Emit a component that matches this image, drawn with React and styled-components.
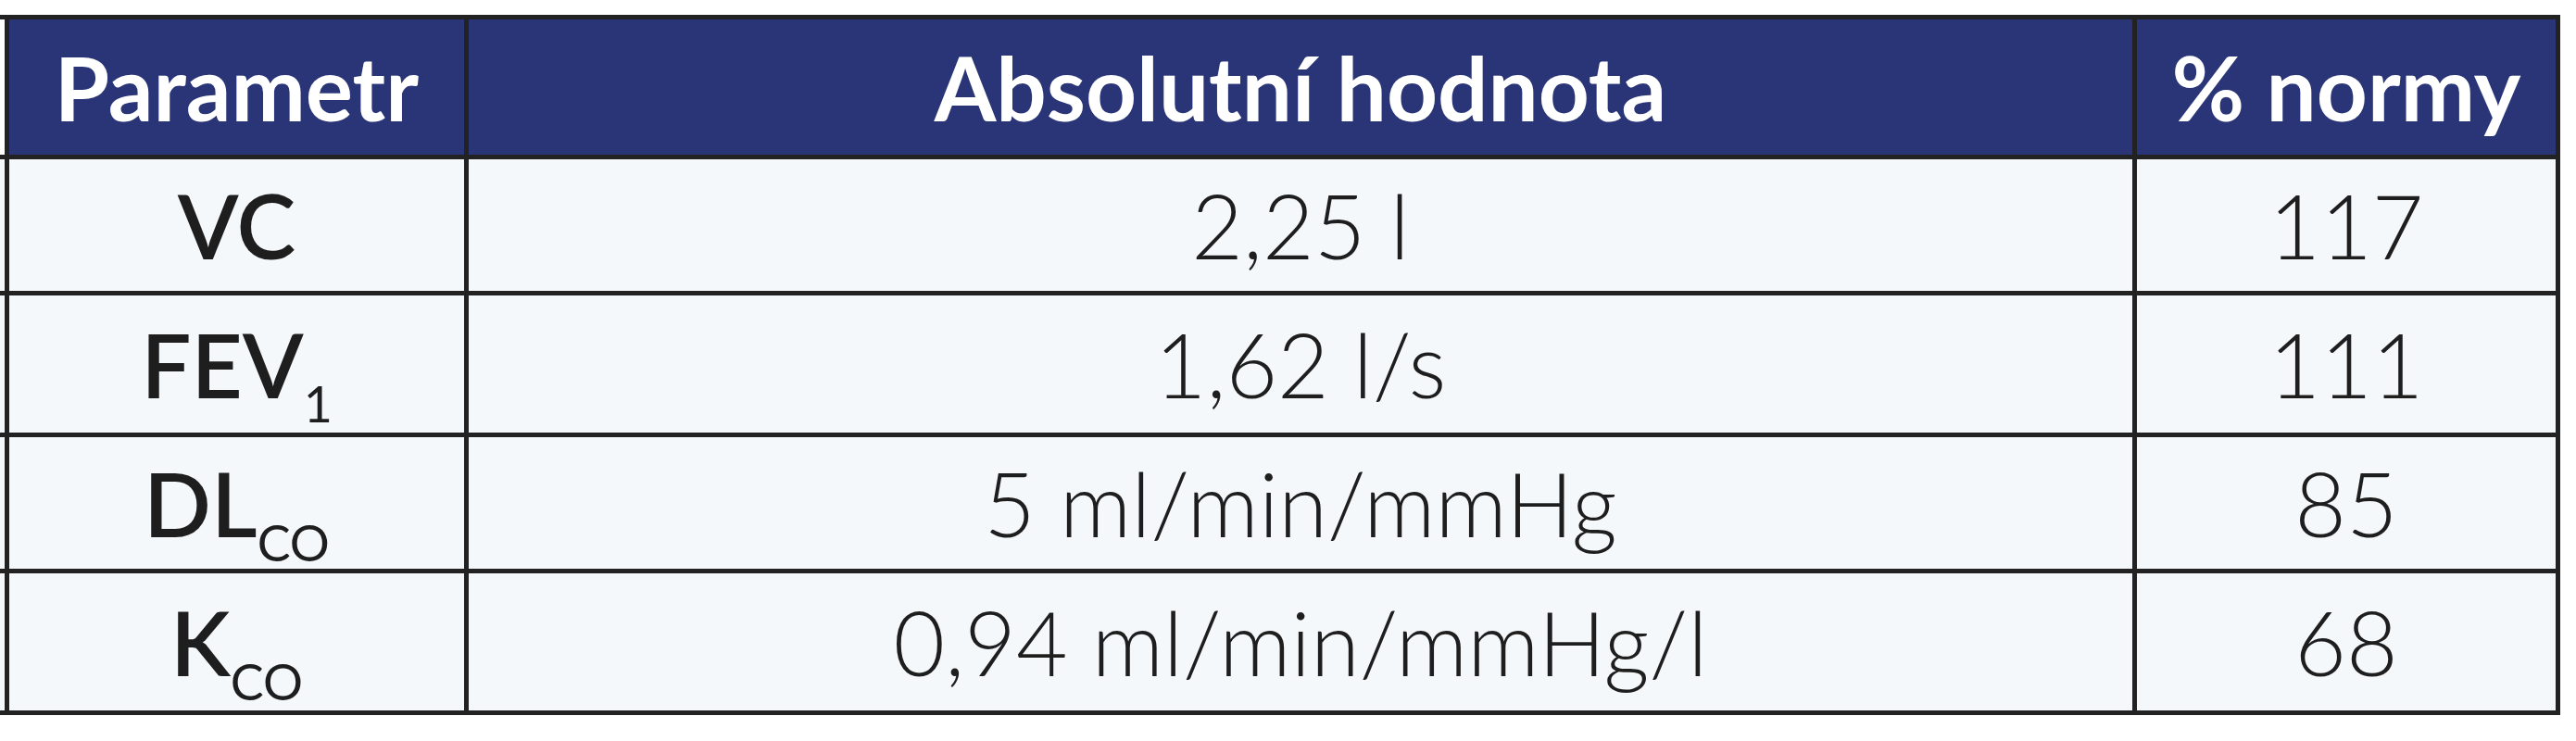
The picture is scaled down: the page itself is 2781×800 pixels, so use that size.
import React from "react";
import styled, { createGlobalStyle } from "styled-components";

const GlobalStyle = createGlobalStyle`
  html, body {
    margin: 0;
    padding: 0;
    background: #ffffff;
  }
  body {
    font-family: "Lato", "Liberation Sans", sans-serif;
  }
`;

const Page = styled.div`
  width: 2781px;
  height: 800px;
  padding-top: 16px;
  box-sizing: border-box;
  background: #ffffff;
`;

// the grid background shows through the gaps as the cell borders
const Table = styled.div`
  display: grid;
  grid-template-columns: 5px 491px 1796px 452px;
  grid-template-rows: 146px 142px 148px 142px 148px;
  column-gap: 5px;
  row-gap: 5px;
  width: 2764px;
  padding: 5px 5px 5px 0;
  box-sizing: border-box;
  background: #222222;
`;

const Cell = styled.div`
  display: flex;
  align-items: center;
  justify-content: center;
  background: ${(p) => (p.$head ? "#2a3578" : "#f4f8fb")};
  color: ${(p) => (p.$head ? "#ffffff" : "#1e1e1e")};
  font-size: 96px;
  font-weight: ${(p) => (p.$head ? 700 : p.$name ? 600 : 300)};
  line-height: 1;
  white-space: nowrap;
`;

const Edge = styled.div`
  background: ${(p) => (p.$head ? "#ffffff" : "#f4f8fb")};
`;

const Sub = styled.span`
  font-size: 0.56em;
  font-weight: 400;
  position: relative;
  top: 0.8em;
`;

const rows = [
  { name: "VC", value: "2,25 l", norm: "117" },
  { name: "FEV", sub: "1", value: "1,62 l/s", norm: "111" },
  { name: "DL", sub: "CO", value: "5 ml/min/mmHg", norm: "85" },
  { name: "K", sub: "CO", value: "0,94 ml/min/mmHg/l", norm: "68" },
];

const App = () => {
  return (
    <>
      <GlobalStyle />
      <Page>
        <Table>
          <Edge $head />
          <Cell $head>Parametr</Cell>
          <Cell $head>Absolutní hodnota</Cell>
          <Cell $head>% normy</Cell>
          {rows.map((r) => (
            <React.Fragment key={r.name}>
              <Edge />
              <Cell $name>
                {r.name}
                {r.sub && <Sub>{r.sub}</Sub>}
              </Cell>
              <Cell>{r.value}</Cell>
              <Cell>{r.norm}</Cell>
            </React.Fragment>
          ))}
        </Table>
      </Page>
    </>
  );
};

export default App;
